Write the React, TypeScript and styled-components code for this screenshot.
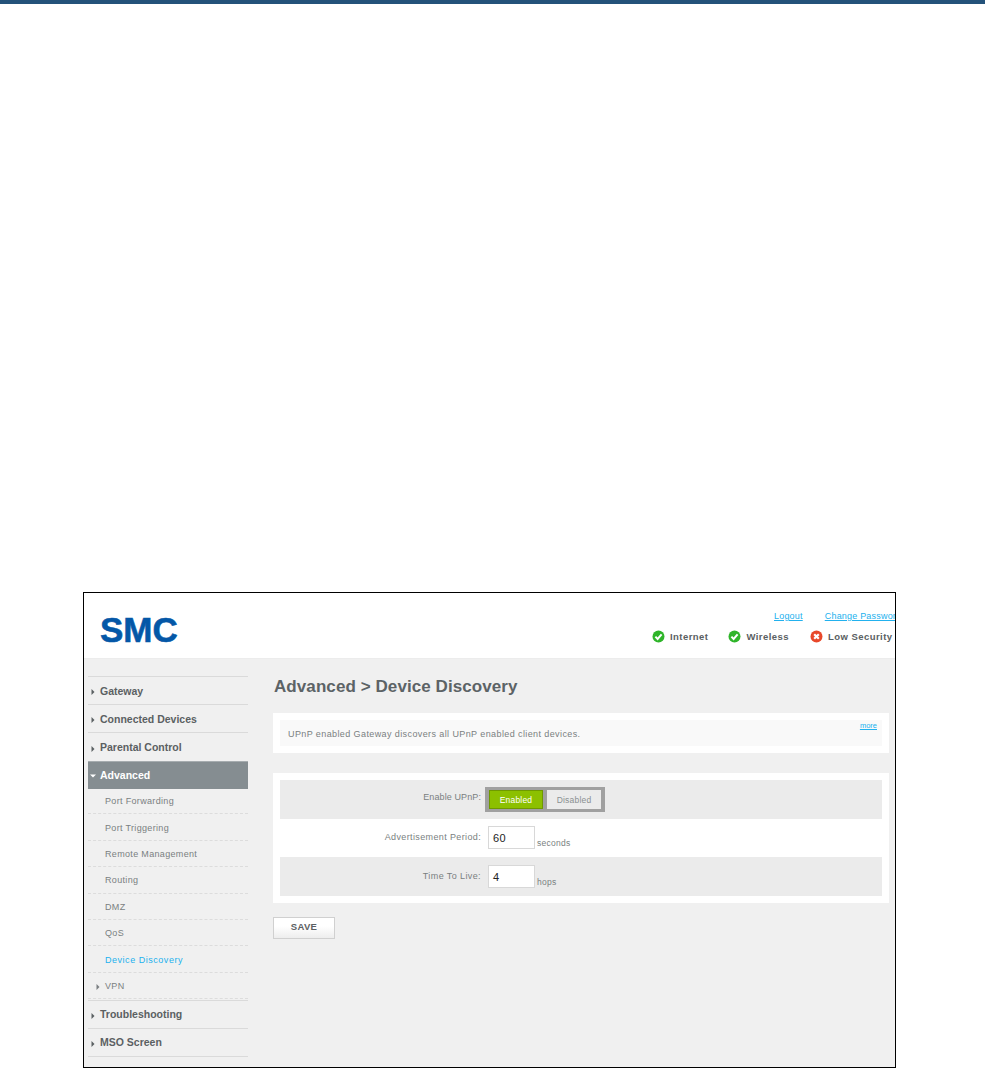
import React from "react";
import styled, { createGlobalStyle } from "styled-components";

const Global = createGlobalStyle`
  html, body { margin: 0; padding: 0; background: #fff; }
  body { font-family: "Liberation Sans", Arial, sans-serif; }
  * { box-sizing: border-box; }
`;

const TopBar = styled.div`height: 4px; background: #24527a;`;
const Frame = styled.div`
  width: 813px; height: 476px; margin: 588px 0 0 83px;
  border: 1px solid #000; background: #f0f0f0; overflow: hidden;
  display: flex; flex-direction: column;
`;
const Header = styled.header`
  height: 66px; flex: none; background: #fff; display: flex; overflow: hidden;
  border-bottom: 1px solid #ececec;
`;
const Logo = styled.div`
  width: 568px; flex: none; padding: 15px 0 0 16px;
  font: bold 35px/44px "Liberation Sans", Arial, sans-serif;
  color: #0457a7; letter-spacing: 0; -webkit-text-stroke: 0.6px #0457a7;
`;
const HeaderRight = styled.div`display: flex; flex-direction: column; flex: none; width: 243px;`;
const Links = styled.div`
  display: flex; gap: 22px; padding: 17px 0 0 122px; white-space: nowrap;
  height: 36px;
`;
const TopLink = styled.a`
  font-size: 9px; line-height: 12px; height: 12px; color: #22b1ee;
  text-decoration: underline; letter-spacing: 0.2px;
`;
const StatusRow = styled.div`display: flex; align-items: center; height: 14px; white-space: nowrap;`;
const Status = styled.span`
  display: flex; align-items: center; gap: 5px; margin-right: ${p => p.$gap}px;
  font-size: 9.5px; font-weight: bold; color: #5a6062; letter-spacing: 0.45px;
`;
const Body = styled.div`flex: 1; display: flex; padding: 17px 6px 0 4px; gap: 25px; min-height: 0;`;
const Sidebar = styled.nav`width: 160px; flex: none;`;
const NavItem = styled.div`
  height: ${p => p.$h || 28}px; display: flex; align-items: center; padding: 0 0 ${p => p.$active ? 2 : 0}px 2px; gap: 4px;
  border-top: ${p => p.$active ? "1px solid #a6acaf" : "1px solid #dadada"};
  border-bottom: ${p => p.$last ? "1px solid #dadada" : "none"};
  margin-top: ${p => p.$mt || 0}px;
  background: ${p => p.$active ? "#858d91" : "transparent"};
  color: ${p => p.$active ? "#fff" : "#5b6062"};
  font-size: 10.5px; font-weight: bold; letter-spacing: 0;
`;
const SubItem = styled.div`
  height: ${p => p.$first ? 25.4 : 26.4}px; display: flex; align-items: center;
  padding: ${p => p.$first ? 0 : 1}px 0 0 ${p => p.$arrow ? 7 : 17}px; gap: 4px;
  border-bottom: 1px dashed #dcdcdc;
  color: ${p => p.$current ? "#22b1ee" : "#7a7f81"};
  font-size: 9px; letter-spacing: ${p => p.$current ? 0.53 : 0.33}px;
`;
const Main = styled.main`flex: 1; min-width: 0;`;
const Title = styled.h1`
  margin: 0; height: 37px; font-size: 17px; line-height: 20px; padding: 1px 0 0 1px;
  font-weight: bold; color: #5c6366; letter-spacing: 0.08px;
`;
const Card = styled.section`background: #fff; padding: 7px; margin-bottom: ${p => p.$mb}px;`;
const InfoBar = styled.div`
  background: #f9f9f9; height: 26px; display: flex; justify-content: space-between;
  padding: 0 5px 0 8px; color: #7a7f81; font-size: 9px; letter-spacing: 0.4px;
`;
const InfoText = styled.span`line-height: 26px; margin-top: 1px;`;
const More = styled.a`
  color: #22b1ee; text-decoration: underline; font-size: 7.5px; line-height: 12px; letter-spacing: 0;
`;
const Row = styled.div`
  height: ${p => p.$h}px; background: ${p => p.$shade ? "#ebebeb" : "#fff"};
  display: grid; grid-template-columns: 201px auto 1fr; align-items: center; column-gap: 4px;
`;
const Label = styled.label`
  text-align: right; font-size: 9px; letter-spacing: ${p => p.$ls}px; color: #7a7f81;
  margin-bottom: ${p => p.$up}px;
`;
const Toggle = styled.div`
  width: 120px; height: 25px; background: #a0a0a0; padding: 3px 4px;
  display: flex; gap: 4px;
`;
const ToggleButton = styled.div`
  height: 19px; width: 54px; display: flex; align-items: center; justify-content: center;
  background: ${p => p.$on ? "#8cc000" : "#ebebeb"};
  border: ${p => p.$on ? "1px solid #6f9a00" : "none"};
  color: ${p => p.$on ? "#fff" : "#8a8f91"}; font-size: 8.5px; letter-spacing: 0.2px;
`;
const FieldWrap = styled.div`
  display: flex; align-items: flex-end; gap: 2px; margin-left: 3px; grid-column: 2 / 4;
  align-self: start; padding-top: ${p => p.$top}px;
`;
const Field = styled.div`
  width: 47px; height: 23px; background: #fff; border: 1px solid #d8d8d8;
  padding-left: 4px; font-size: 11px; line-height: 22px; color: #222; letter-spacing: 0.5px;
`;
const Unit = styled.span`font-size: 8.5px; letter-spacing: 0.25px; color: #7a7f81; line-height: 10px; margin-bottom: 1px;`;
const SaveButton = styled.button`
  display: block; width: 62px; height: 22px; padding: 0 0 4px; margin: 0;
  border: 1px solid #d0d0d0; background: linear-gradient(#fff 40%, #ededed);
  color: #5b6062; font: bold 9.5px "Liberation Sans", Arial, sans-serif; letter-spacing: 0.3px;
`;

const Arrow = ({ down, color = "#5b6062" }: { down?: boolean; color?: string }) => (
  <svg width="6" height="6" viewBox="0 0 6 6" style={{ flex: "none", marginTop: down ? 2 : 3 }}>
    {down ? <path d="M0 1.5h6L3 4.5z" fill={color} /> : <path d="M1.5 0v6L4.5 3z" fill={color} />}
  </svg>
);
const Ok = () => (
  <svg width="13" height="13" viewBox="0 0 13 13">
    <circle cx="6.5" cy="6.5" r="6" fill="#2fb52a" />
    <path d="M3.4 6.6l2.2 2.3 4-4.6" stroke="#fff" strokeWidth="2" fill="none" />
  </svg>
);
const Bad = () => (
  <svg width="13" height="13" viewBox="0 0 13 13">
    <circle cx="6.5" cy="6.5" r="6" fill="#e8482a" />
    <path d="M4.2 4.2l4.6 4.6M8.8 4.2l-4.6 4.6" stroke="#fff" strokeWidth="2.2" fill="none" />
  </svg>
);

const subs = ["Port Triggering", "Remote Management", "Routing", "DMZ", "QoS"];

export default function App() {
  return (
    <>
      <Global />
      <TopBar />
      <Frame>
        <Header>
          <Logo>SMC</Logo>
          <HeaderRight>
            <Links>
              <TopLink>Logout</TopLink>
              <TopLink>Change Password</TopLink>
            </Links>
            <StatusRow>
              <Status $gap={20}><Ok />Internet</Status>
              <Status $gap={21}><Ok />Wireless</Status>
              <Status $gap={0}><Bad />Low Security</Status>
            </StatusRow>
          </HeaderRight>
        </Header>
        <Body>
          <Sidebar>
            <NavItem><Arrow />Gateway</NavItem>
            <NavItem><Arrow />Connected Devices</NavItem>
            <NavItem $h={29}><Arrow />Parental Control</NavItem>
            <NavItem $active><Arrow down color="#fff" />Advanced</NavItem>
            <SubItem $first>Port Forwarding</SubItem>
            {subs.map(s => <SubItem key={s}>{s}</SubItem>)}
            <SubItem $current>Device Discovery</SubItem>
            <SubItem $arrow><Arrow color="#7a7f81" />VPN</SubItem>
            <NavItem $mt={0.8}><Arrow />Troubleshooting</NavItem>
            <NavItem $last $h={29}><Arrow />MSO Screen</NavItem>
          </Sidebar>
          <Main>
            <Title>Advanced &gt; Device Discovery</Title>
            <Card $mb={20}>
              <InfoBar>
                <InfoText>UPnP enabled Gateway discovers all UPnP enabled client devices.</InfoText>
                <More>more</More>
              </InfoBar>
            </Card>
            <Card $mb={14}>
              <Row $h={39} $shade>
                <Label $ls={0.1} $up={6}>Enable UPnP:</Label>
                <Toggle>
                  <ToggleButton $on>Enabled</ToggleButton>
                  <ToggleButton>Disabled</ToggleButton>
                </Toggle>
              </Row>
              <Row $h={38}>
                <Label $ls={0.37} $up={2}>Advertisement Period:</Label>
                <FieldWrap $top={7}><Field>60</Field><Unit>seconds</Unit></FieldWrap>
              </Row>
              <Row $h={39} $shade>
                <Label $ls={0.4} $up={2}>Time To Live:</Label>
                <FieldWrap $top={8}><Field>4</Field><Unit>hops</Unit></FieldWrap>
              </Row>
            </Card>
            <SaveButton>SAVE</SaveButton>
          </Main>
        </Body>
      </Frame>
    </>
  );
}
